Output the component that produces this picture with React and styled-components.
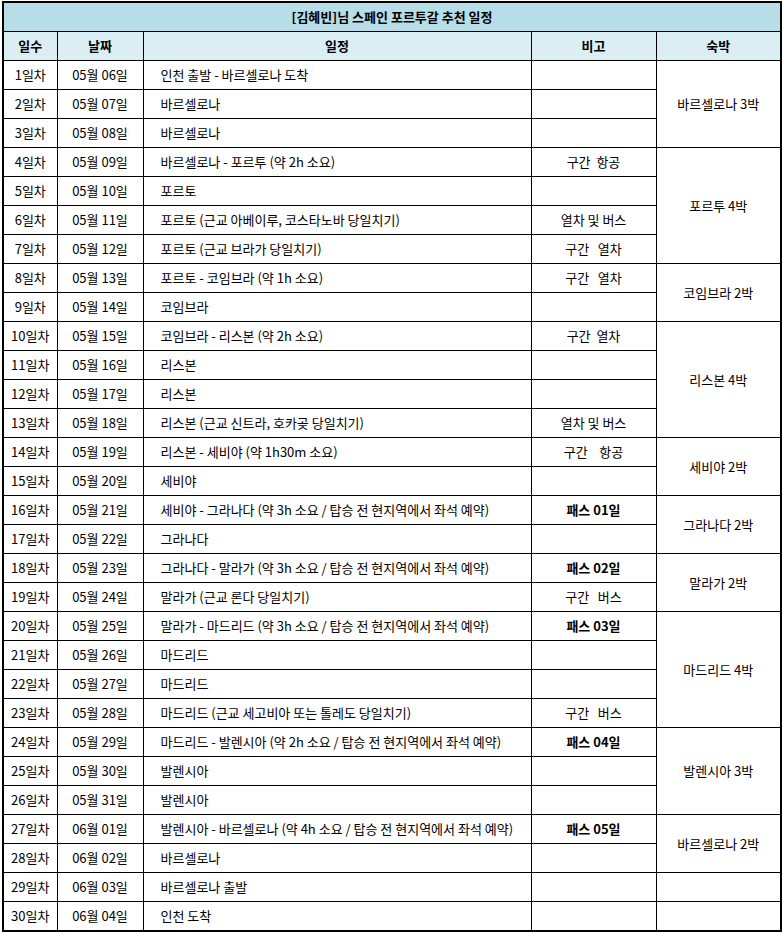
import React from "react"
import styled, { createGlobalStyle } from "styled-components"

const GlobalStyle = createGlobalStyle`
	body {
		margin: 0;
		background: #ffffff;
		font-family: "Noto Sans CJK KR", "Noto Sans", sans-serif;
		color: #000000;
	}
`

const Page = styled.div`
	padding: 1px 2px;
`

const Table = styled.table`
	width: 778px;
	border-collapse: collapse;
	table-layout: fixed;
	border: 2px solid #000;
	font-size: 13px;
`

const Cell = styled.td`
	height: 28px;
	padding: 0;
	border: 1px solid #000;
	line-height: 16px;
	text-align: ${props => (props.$left ? "left" : "center")};
	padding-left: ${props => (props.$left ? "17px" : "0")};
	font-weight: ${props => (props.$bold ? 700 : 400)};
	white-space: pre;
	vertical-align: middle;
`

const TitleCell = styled(Cell).attrs({ as: "th" })`
	background-color: #b7dde8;
	font-weight: 700;
`

const HeadCell = styled(Cell).attrs({ as: "th" })`
	background-color: #daeef3;
	font-weight: 700;
`

const days = [
	["05월 06일", "인천 출발 - 바르셀로나 도착", ""],
	["05월 07일", "바르셀로나", ""],
	["05월 08일", "바르셀로나", ""],
	["05월 09일", "바르셀로나 - 포르투 (약 2h 소요)", "구간  항공"],
	["05월 10일", "포르토", ""],
	["05월 11일", "포르토 (근교 아베이루, 코스타노바 당일치기)", "열차 및 버스"],
	["05월 12일", "포르토 (근교 브라가 당일치기)", "구간   열차"],
	["05월 13일", "포르토 - 코임브라 (약 1h 소요)", "구간   열차"],
	["05월 14일", "코임브라", ""],
	["05월 15일", "코임브라 - 리스본 (약 2h 소요)", "구간  열차"],
	["05월 16일", "리스본", ""],
	["05월 17일", "리스본", ""],
	["05월 18일", "리스본 (근교 신트라, 호카곶 당일치기)", "열차 및 버스"],
	["05월 19일", "리스본 - 세비야 (약 1h30m 소요)", "구간    항공"],
	["05월 20일", "세비야", ""],
	["05월 21일", "세비야 - 그라나다 (약 3h 소요 / 탑승 전 현지역에서 좌석 예약)", "패스 01일", true],
	["05월 22일", "그라나다", ""],
	["05월 23일", "그라나다 - 말라가 (약 3h 소요 / 탑승 전 현지역에서 좌석 예약)", "패스 02일", true],
	["05월 24일", "말라가 (근교 론다 당일치기)", "구간   버스"],
	["05월 25일", "말라가 - 마드리드 (약 3h 소요 / 탑승 전 현지역에서 좌석 예약)", "패스 03일", true],
	["05월 26일", "마드리드", ""],
	["05월 27일", "마드리드", ""],
	["05월 28일", "마드리드 (근교 세고비아 또는 톨레도 당일치기)", "구간   버스"],
	["05월 29일", "마드리드 - 발렌시아 (약 2h 소요 / 탑승 전 현지역에서 좌석 예약)", "패스 04일", true],
	["05월 30일", "발렌시아", ""],
	["05월 31일", "발렌시아", ""],
	["06월 01일", "발렌시아 - 바르셀로나 (약 4h 소요 / 탑승 전 현지역에서 좌석 예약)", "패스 05일", true],
	["06월 02일", "바르셀로나", ""],
	["06월 03일", "바르셀로나 출발", ""],
	["06월 04일", "인천 도착", ""],
]

// 숙박 칸: 시작 일차(0부터) -> [행 수, 내용]
const stays = {
	0: [3, "바르셀로나 3박"],
	3: [4, "포르투 4박"],
	7: [2, "코임브라 2박"],
	9: [4, "리스본 4박"],
	13: [2, "세비야 2박"],
	15: [2, "그라나다 2박"],
	17: [2, "말라가 2박"],
	19: [4, "마드리드 4박"],
	23: [3, "발렌시아 3박"],
	26: [2, "바르셀로나 2박"],
	28: [1, ""],
	29: [1, ""],
}

export default function App() {
	return (
		<Page>
			<GlobalStyle />
			<Table>
				<colgroup>
					<col style={{ width: 54 }} />
					<col style={{ width: 86 }} />
					<col style={{ width: 388 }} />
					<col style={{ width: 125 }} />
					<col style={{ width: 125 }} />
				</colgroup>
				<thead>
					<tr>
						<TitleCell colSpan={5}>[김혜빈]님 스페인 포르투갈 추천 일정</TitleCell>
					</tr>
					<tr>
						<HeadCell>일수</HeadCell>
						<HeadCell>날짜</HeadCell>
						<HeadCell>일정</HeadCell>
						<HeadCell>비고</HeadCell>
						<HeadCell>숙박</HeadCell>
					</tr>
				</thead>
				<tbody>
					{days.map(([date, plan, note, bold], i) => (
						<tr key={i}>
							<Cell>{i + 1}일차</Cell>
							<Cell>{date}</Cell>
							<Cell $left>{plan}</Cell>
							<Cell $bold={bold}>{note}</Cell>
							{stays[i] && <Cell rowSpan={stays[i][0]}>{stays[i][1]}</Cell>}
						</tr>
					))}
				</tbody>
			</Table>
		</Page>
	)
}
